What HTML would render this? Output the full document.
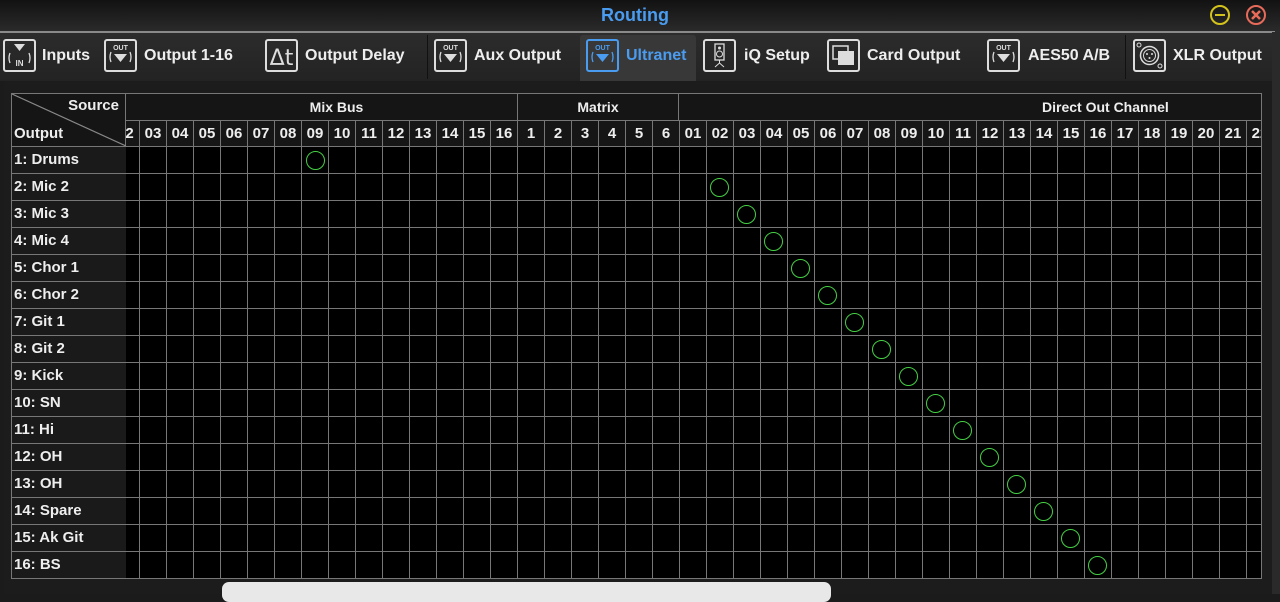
<!DOCTYPE html>
<html><head><meta charset="utf-8"><style>
*{margin:0;padding:0;box-sizing:border-box}
body{width:1280px;height:594px;overflow:hidden;background:#1b1b1b;font-family:"Liberation Sans",sans-serif;font-weight:bold;color:#eee;position:relative}
.a{position:absolute}
#title{left:0;top:0;width:1280px;height:32px;background:linear-gradient(#121212,#2b2b2b)}
#title .t{left:0;width:1270px;text-align:center;top:5px;font-size:18px;color:#4a9cf0}
#tabs{left:0;top:31px;width:1275px;height:50px;background:linear-gradient(#2c2c2c,#232323);border-top:2px solid #8a8a8a}
.tab{position:absolute;top:0;height:48px;font-size:16px;color:#eee}
.tab .ic{position:absolute;top:6px;width:33px;height:33px;border:2px solid #ddd;border-radius:3px}
.tab .tx{position:absolute;top:14px;white-space:nowrap}
.sep{position:absolute;top:2px;width:1px;height:44px;background:#111}
#panel{left:4px;top:81px;width:1268px;height:513px;background:#1c1c1c}
#grid{left:11px;top:93px;width:1251px;height:486px;overflow:hidden;background:#151515;border:1px solid #777}
.cells{position:absolute;left:114px;top:52px;width:1200px;height:435px;background:#000;
background-image:linear-gradient(to right,#777 1px,transparent 1px),linear-gradient(to bottom,#777 1px,transparent 1px);
background-size:27px 27px,27px 27px;background-position:13px 0,0 0}
.lab{position:absolute;left:0;top:52px;width:114px;height:435px;background:#1a1a1a;
background-image:linear-gradient(to bottom,#777 1px,transparent 1px);background-size:27px 27px}
.lab div{height:27px;line-height:27px;padding-left:2px;font-size:15px}
.nums{position:absolute;left:114px;top:26px;height:27px;width:1300px;border-top:1px solid #777;white-space:nowrap;font-size:15px;background:#161616}
.nums span{display:inline-block;width:27px;height:26px;line-height:26px;text-align:center;border-left:1px solid #777;overflow:hidden;vertical-align:top}
.c{position:absolute;width:19px;height:19px;border:1.7px solid #44d044;border-radius:50%}
</style></head><body>
<div id="title" class="a"><div class="t a">Routing</div>
<svg class="a" style="left:1209px;top:4px" width="22" height="22"><circle cx="11" cy="11" r="9" fill="none" stroke="#d4c21c" stroke-width="2"/><line x1="6" y1="11" x2="16" y2="11" stroke="#d4c21c" stroke-width="2"/></svg>
<svg class="a" style="left:1245px;top:4px" width="22" height="22"><circle cx="11" cy="11" r="9" fill="none" stroke="#e86a5a" stroke-width="2"/><path d="M7 7L15 15M15 7L7 15" stroke="#e86a5a" stroke-width="2.5"/></svg>
</div>
<div id="tabs" class="a">
<div class="tab" style="left:0;width:100px"><div class="ic" style="left:3px"><svg width="29" height="29"><path d="M9 3h11l-5.5 7z" fill="#ddd"/><text x="14.5" y="25" font-size="8" fill="#ddd" text-anchor="middle" font-family="Liberation Sans">IN</text><path d="M5 12q-2 5 0 10M24 12q2 5 0 10" stroke="#ddd" fill="none" stroke-width="1.3"/></svg></div><div class="tx" style="left:42px">Inputs</div></div>
<div class="tab" style="left:100px"><div class="ic" style="left:4px"><svg width="29" height="29"><text x="14.5" y="9" font-size="7" fill="#ddd" text-anchor="middle" font-family="Liberation Sans">OUT</text><path d="M8 13h13l-6.5 8z" fill="#ddd"/><path d="M5 11q-2 5 0 10M24 11q2 5 0 10" stroke="#ddd" fill="none" stroke-width="1.3"/></svg></div><div class="tx" style="left:44px">Output 1-16</div></div>
<div class="tab" style="left:262px"><div class="ic" style="left:3px"><svg width="29" height="29"><text x="14.5" y="24" font-size="22" fill="#ddd" text-anchor="middle" font-family="DejaVu Sans" font-weight="normal">Δt</text></svg></div><div class="tx" style="left:43px">Output Delay</div></div>
<div class="sep" style="left:427px"></div>
<div class="tab" style="left:431px"><div class="ic" style="left:3px"><svg width="29" height="29"><text x="14.5" y="9" font-size="7" fill="#ddd" text-anchor="middle" font-family="Liberation Sans">OUT</text><path d="M8 13h13l-6.5 8z" fill="#ddd"/><path d="M5 11q-2 5 0 10M24 11q2 5 0 10" stroke="#ddd" fill="none" stroke-width="1.3"/></svg></div><div class="tx" style="left:43px">Aux Output</div></div>
<div class="tab" style="left:580px;width:116px;background:#383838;top:2px;height:47px;border-radius:3px 3px 0 0"><div class="ic" style="left:6px;top:4px;border-color:#4a9cf0"><svg width="29" height="29"><text x="14.5" y="9" font-size="7" fill="#4a9cf0" text-anchor="middle" font-family="Liberation Sans">OUT</text><path d="M8 13h13l-6.5 8z" fill="#4a9cf0"/><path d="M5 11q-2 5 0 10M24 11q2 5 0 10" stroke="#4a9cf0" fill="none" stroke-width="1.3"/></svg></div><div class="tx" style="left:46px;top:12px;color:#4a9cf0">Ultranet</div></div>
<div class="tab" style="left:700px"><div class="ic" style="left:3px"><svg width="29" height="29"><rect x="10" y="3" width="9" height="16" fill="none" stroke="#ddd" stroke-width="1.3"/><circle cx="14.5" cy="7" r="1.5" fill="#ddd"/><circle cx="14.5" cy="13" r="3" fill="none" stroke="#ddd"/><path d="M14.5 19v3M10 26l4.5-4 4.5 4" stroke="#ddd" fill="none"/></svg></div><div class="tx" style="left:44px">iQ Setup</div></div>
<div class="tab" style="left:824px"><div class="ic" style="left:3px"><svg width="29" height="29"><rect x="4" y="5" width="15" height="13" fill="none" stroke="#ddd" stroke-width="1.5"/><rect x="9" y="10" width="16" height="14" fill="#ddd"/></svg></div><div class="tx" style="left:43px">Card Output</div></div>
<div class="tab" style="left:984px"><div class="ic" style="left:3px"><svg width="29" height="29"><text x="14.5" y="9" font-size="7" fill="#ddd" text-anchor="middle" font-family="Liberation Sans">OUT</text><path d="M8 13h13l-6.5 8z" fill="#ddd"/><path d="M5 11q-2 5 0 10M24 11q2 5 0 10" stroke="#ddd" fill="none" stroke-width="1.3"/></svg></div><div class="tx" style="left:44px">AES50 A/B</div></div>
<div class="sep" style="left:1125px"></div>
<div class="tab" style="left:1130px"><div class="ic" style="left:3px"><svg width="29" height="29"><circle cx="14.5" cy="14.5" r="9" fill="none" stroke="#ddd" stroke-width="1.5"/><circle cx="14.5" cy="14.5" r="6" fill="none" stroke="#ddd"/><circle cx="4" cy="4" r="2" fill="none" stroke="#ddd"/><circle cx="25" cy="25" r="2" fill="none" stroke="#ddd"/><circle cx="12" cy="13" r="1" fill="#ddd"/><circle cx="17" cy="13" r="1" fill="#ddd"/><circle cx="14.5" cy="17" r="1" fill="#ddd"/></svg></div><div class="tx" style="left:43px">XLR Output</div></div>
</div>
<div id="panel" class="a"></div>
<div id="grid" class="a">
<div class="a" style="left:0;top:0;width:114px;height:52px;border-right:1px solid #777"><svg width="114" height="52" class="a"><line x1="0" y1="0" x2="114" y2="52" stroke="#888" stroke-width="1.2"/></svg><div class="a" style="right:6px;top:3px;font-size:15px">Source</div><div class="a" style="left:2px;top:31px;font-size:15px">Output</div></div>
<div class="a" style="left:114px;top:0;width:391px;height:26px;line-height:26px;text-align:center;font-size:14px;padding-left:30px">Mix Bus</div>
<div class="a" style="left:505px;top:0;width:162px;height:26px;line-height:26px;text-align:center;font-size:14px;border-left:1px solid #777;border-right:1px solid #777">Matrix</div>
<div class="a" style="left:1030px;top:0;height:26px;line-height:26px;font-size:14px">Direct Out Channel</div>
<div class="nums"><span style="width:13px;border-left:none;text-align:left;text-indent:-9px">02</span><span>03</span><span>04</span><span>05</span><span>06</span><span>07</span><span>08</span><span>09</span><span>10</span><span>11</span><span>12</span><span>13</span><span>14</span><span>15</span><span>16</span><span>1</span><span>2</span><span>3</span><span>4</span><span>5</span><span>6</span><span>01</span><span>02</span><span>03</span><span>04</span><span>05</span><span>06</span><span>07</span><span>08</span><span>09</span><span>10</span><span>11</span><span>12</span><span>13</span><span>14</span><span>15</span><span>16</span><span>17</span><span>18</span><span>19</span><span>20</span><span>21</span><span>22</span></div>
<div class="cells"></div>
<div class="lab"><div>1: Drums</div><div>2: Mic 2</div><div>3: Mic 3</div><div>4: Mic 4</div><div>5: Chor 1</div><div>6: Chor 2</div><div>7: Git 1</div><div>8: Git 2</div><div>9: Kick</div><div>10: SN</div><div>11: Hi</div><div>12: OH</div><div>13: OH</div><div>14: Spare</div><div>15: Ak Git</div><div>16: BS</div></div>
<div class="c" style="left:294px;top:57px"></div>
<div class="c" style="left:698px;top:84px"></div>
<div class="c" style="left:725px;top:111px"></div>
<div class="c" style="left:752px;top:138px"></div>
<div class="c" style="left:779px;top:165px"></div>
<div class="c" style="left:806px;top:192px"></div>
<div class="c" style="left:833px;top:219px"></div>
<div class="c" style="left:860px;top:246px"></div>
<div class="c" style="left:887px;top:273px"></div>
<div class="c" style="left:914px;top:300px"></div>
<div class="c" style="left:941px;top:327px"></div>
<div class="c" style="left:968px;top:354px"></div>
<div class="c" style="left:995px;top:381px"></div>
<div class="c" style="left:1022px;top:408px"></div>
<div class="c" style="left:1049px;top:435px"></div>
<div class="c" style="left:1076px;top:462px"></div>
</div>
<div class="a" style="left:222px;top:582px;width:609px;height:20px;background:#e8e8e8;border-radius:7px"></div>
<div class="a" style="left:1272px;top:32px;width:8px;height:562px;background:#2a2a2a"></div>
</body></html>
